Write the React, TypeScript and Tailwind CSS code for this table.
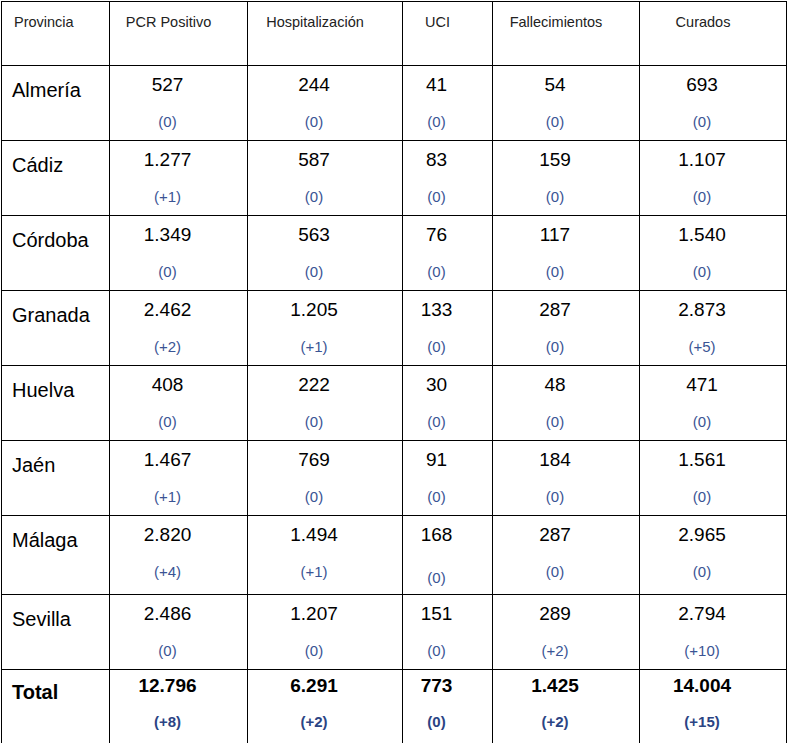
import React from 'react';

type Row = {
  name: string;
  h: string;
  values: [string, string][];
};

const rows: Row[] = [
  { name: 'Almería', h: 'h-[75px]', values: [['527', '(0)'], ['244', '(0)'], ['41', '(0)'], ['54', '(0)'], ['693', '(0)']] },
  { name: 'Cádiz', h: 'h-[75px]', values: [['1.277', '(+1)'], ['587', '(0)'], ['83', '(0)'], ['159', '(0)'], ['1.107', '(0)']] },
  { name: 'Córdoba', h: 'h-[75px]', values: [['1.349', '(0)'], ['563', '(0)'], ['76', '(0)'], ['117', '(0)'], ['1.540', '(0)']] },
  { name: 'Granada', h: 'h-[74px]', values: [['2.462', '(+2)'], ['1.205', '(+1)'], ['133', '(0)'], ['287', '(0)'], ['2.873', '(+5)']] },
  { name: 'Huelva', h: 'h-[75px]', values: [['408', '(0)'], ['222', '(0)'], ['30', '(0)'], ['48', '(0)'], ['471', '(0)']] },
  { name: 'Jaén', h: 'h-[75px]', values: [['1.467', '(+1)'], ['769', '(0)'], ['91', '(0)'], ['184', '(0)'], ['1.561', '(0)']] },
  { name: 'Málaga', h: 'h-[79px]', values: [['2.820', '(+4)'], ['1.494', '(+1)'], ['168', '(0)'], ['287', '(0)'], ['2.965', '(0)']] },
  { name: 'Sevilla', h: 'h-[74px]', values: [['2.486', '(0)'], ['1.207', '(0)'], ['151', '(0)'], ['289', '(+2)'], ['2.794', '(+10)']] },
];

const total: [string, string][] = [
  ['12.796', '(+8)'],
  ['6.291', '(+2)'],
  ['773', '(0)'],
  ['1.425', '(+2)'],
  ['14.004', '(+15)'],
];

const headers = ['PCR Positivo', 'Hospitalización', 'UCI', 'Fallecimientos', 'Curados'];
const widths = ['w-[138px]', 'w-[155px]', 'w-[90px]', 'w-[147px]', 'w-[147px]'];

const cell = 'border border-black align-top p-0';

export default function App() {
  return (
    <div className="bg-white w-[788px] h-[743px] overflow-hidden pl-px pt-px font-['Liberation_Sans',Arial,sans-serif]">
      <table className="border-collapse table-fixed w-[786px]">
        <colgroup>
          <col className="w-[108px]" />
          {widths.map((w, i) => (
            <col key={i} className={w} />
          ))}
        </colgroup>
        <thead>
          <tr className="h-[64px]">
            <th className={`${cell} text-left font-normal text-[14.5px] leading-[20px] text-[#222] pt-[10px] pl-[12px]`}>
              Provincia
            </th>
            {headers.map((h) => (
              <th
                key={h}
                className={`${cell} text-center font-normal text-[14.5px] leading-[20px] text-[#222] pt-[10px] pr-[20px]`}
              >
                {h}
              </th>
            ))}
          </tr>
        </thead>
        <tbody>
          {rows.map((r) => (
            <tr key={r.name} className={r.h}>
              <td className={`${cell} pl-[10px] text-[20px] leading-[48px] text-black`}>{r.name}</td>
              {r.values.map(([n, d], i) => (
                <td key={i} className={`${cell} text-center pr-[22px]`}>
                  <div className="text-[19px] leading-[38px] text-black">{n}</div>
                  <div
                    className={`text-[15px] leading-[36px] text-[#3a5494] ${
                      r.name === 'Málaga' && i === 2 ? 'translate-y-[6px]' : ''
                    }`}
                  >
                    {d}
                  </div>
                </td>
              ))}
            </tr>
          ))}
          <tr className="h-[74px]">
            <td className={`${cell} pl-[10px] text-[20px] font-bold leading-[44px] text-black`}>Total</td>
            {total.map(([n, d], i) => (
              <td key={i} className={`${cell} text-center pr-[22px]`}>
                <div className="text-[19px] font-bold leading-[32px] text-black">{n}</div>
                <div className="text-[15px] font-bold leading-[40px] text-[#2b4484]">{d}</div>
              </td>
            ))}
          </tr>
        </tbody>
      </table>
    </div>
  );
}
